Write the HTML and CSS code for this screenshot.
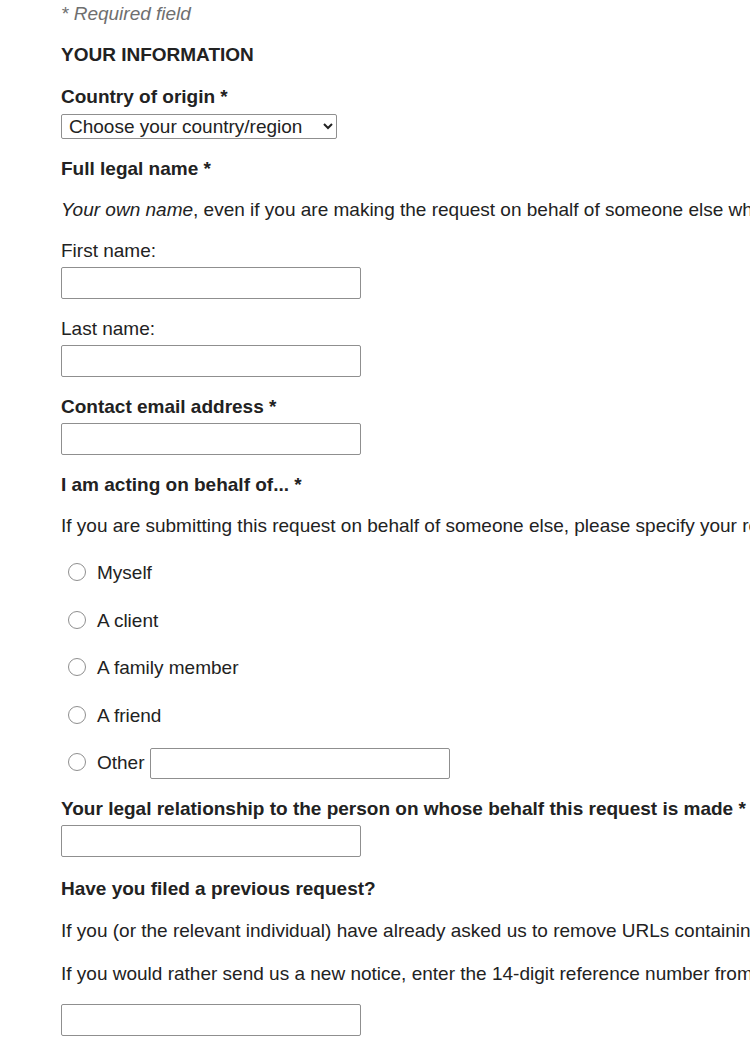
FILE: index.html
```html
<!DOCTYPE html>
<html lang="en">
<head>
    <meta charset="UTF-8">
    <meta name="viewport" content="width=device-width, initial-scale=1.0">
    <title>Removal request - Your information</title>
    <link rel="stylesheet" href="styles.css">
</head>
<body>
    <form class="request-form">
        <p class="required-note">* Required field</p>

        <h2 class="section-title">YOUR INFORMATION</h2>

        <!-- Country -->
        <div class="field">
            <label class="field-label" for="country">Country of origin *</label>
            <select id="country" class="country-select">
                <option>Choose your country/region</option>
            </select>
        </div>

        <!-- Name -->
        <p class="field-label">Full legal name *</p>
        <p class="hint"><em>Your own name</em>, even if you are making the request on behalf of someone else who is the subject of the URLs</p>

        <div class="field">
            <label class="plain-label" for="firstName">First name:</label>
            <input type="text" id="firstName" class="text-input">
        </div>

        <div class="field">
            <label class="plain-label" for="lastName">Last name:</label>
            <input type="text" id="lastName" class="text-input">
        </div>

        <div class="field">
            <label class="field-label" for="email">Contact email address *</label>
            <input type="email" id="email" class="text-input">
        </div>

        <!-- Acting on behalf of -->
        <p class="field-label">I am acting on behalf of... *</p>
        <p class="hint">If you are submitting this request on behalf of someone else, please specify your relationship to that person</p>

        <div class="radio-list">
            <label class="radio-row"><input type="radio" name="behalf" class="radio"> Myself</label>
            <label class="radio-row"><input type="radio" name="behalf" class="radio"> A client</label>
            <label class="radio-row"><input type="radio" name="behalf" class="radio"> A family member</label>
            <label class="radio-row"><input type="radio" name="behalf" class="radio"> A friend</label>
            <label class="radio-row"><input type="radio" name="behalf" class="radio"> Other <input type="text" class="text-input other-input"></label>
        </div>

        <div class="field relationship-field">
            <label class="field-label" for="relationship">Your legal relationship to the person on whose behalf this request is made *</label>
            <input type="text" id="relationship" class="text-input">
        </div>

        <!-- Previous request -->
        <p class="field-label previous-label">Have you filed a previous request?</p>
        <p class="hint previous-hint">If you (or the relevant individual) have already asked us to remove URLs containing this person's name, please let us know</p>
        <p class="hint">If you would rather send us a new notice, enter the 14-digit reference number from your earlier request</p>
        <input type="text" id="reference" class="text-input">
    </form>
</body>
</html>
```

FILE: styles.css
```css
/* General Styles */
html {
    overflow: hidden;
}

body {
    font-family: 'Liberation Sans', Arial, sans-serif;
    font-size: 19px;
    line-height: 22px;
    color: #222;
    background: #fff;
    margin: 0;
    padding: 3px 0 0 61px;
    white-space: nowrap;
}

p {
    margin: 0 0 19px;
}

/* Headings and labels */
.required-note {
    color: #6f6f6f;
    font-style: italic;
}

.section-title {
    font-size: 19px;
    line-height: 22px;
    font-weight: bold;
    margin: 0 0 20px;
}

.field {
    display: flex;
    flex-direction: column;
    align-items: flex-start;
    margin-bottom: 19px;
}

.field-label {
    display: block;
    font-weight: bold;
    margin-bottom: 19px;
}

.field .field-label,
.plain-label {
    margin-bottom: 5px;
}

.hint em {
    font-style: italic;
}

.relationship-field {
    margin-bottom: 21px;
}

.previous-label {
    margin-bottom: 20px;
}

.previous-hint {
    margin-bottom: 21px;
}

/* Inputs */
.country-select {
    width: 276px;
    height: 25px;
    margin-top: 1px;
    padding: 0 2px 0 3px;
    font-family: inherit;
    font-size: 19px;
    color: #222;
    background: #fff;
    border: 1px solid #8f8f8f;
    border-radius: 2px;
}

.text-input {
    width: 300px;
    height: 32px;
    box-sizing: border-box;
    margin: 0;
    padding: 2px 4px;
    font-family: inherit;
    font-size: 16px;
    border: 1px solid #8f8f8f;
    border-radius: 2px;
    background: #fff;
}

/* Radio group */
.radio-list {
    display: flex;
    flex-direction: column;
    gap: 15.5px;
    margin: 20px 0 19px;
}

.radio-row {
    display: flex;
    align-items: center;
    height: 32px;
}

.radio {
    appearance: none;
    width: 18px;
    height: 18px;
    margin: -2px 11px 0 7px;
    border: 1px solid #8f8f8f;
    border-radius: 50%;
    background: #fff;
}

.other-input {
    margin-left: 5px;
    height: 31px;
}
```
